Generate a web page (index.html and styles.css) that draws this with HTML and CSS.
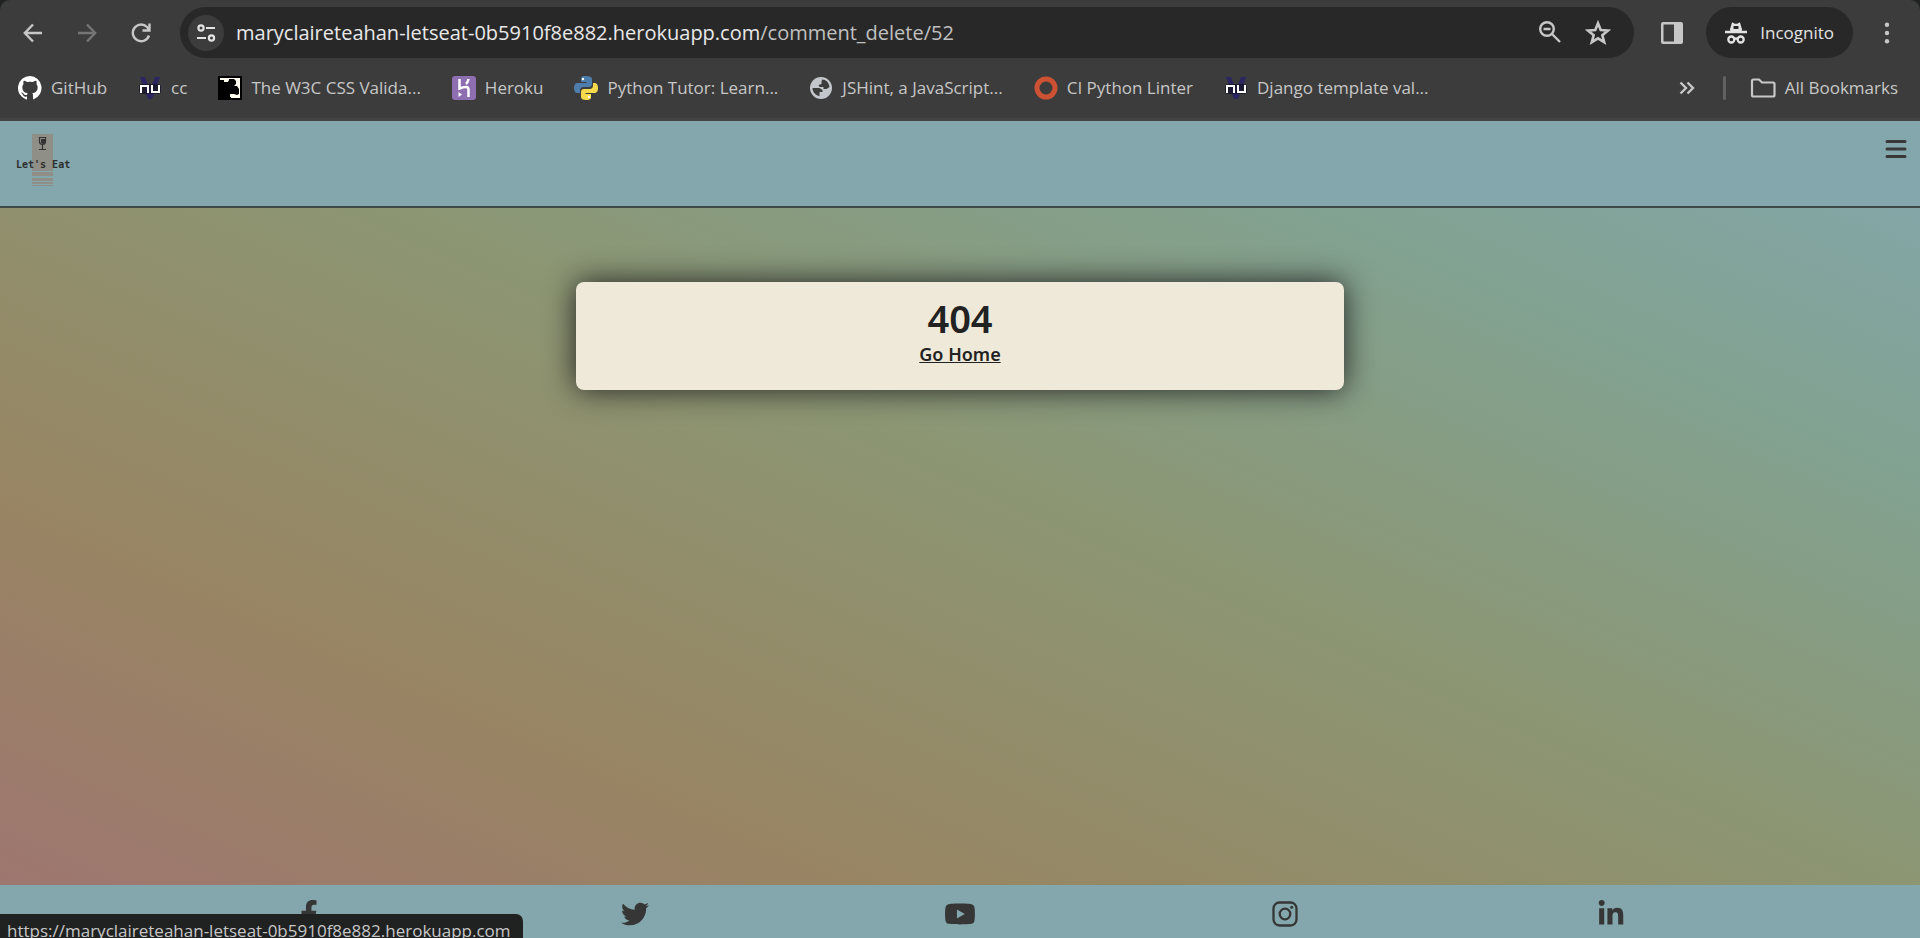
FILE: index.html
```html
<!DOCTYPE html>
<html lang="en">
<head>
<meta charset="utf-8">
<title>404 - Let's Eat</title>
<link rel="stylesheet" href="styles.css">
</head>
<body>
<div class="window">
<div class="chrome">
  <div class="toolbar">
    <div class="nav-buttons">
      <button class="icon-btn" aria-label="Back"><svg viewBox="0 0 24 24" width="24" height="24" fill="none" stroke="currentColor" stroke-width="2.4"><path d="M21 12H4M12 3.500 3.800 12 12 20.500"/></svg></button>
      <button class="icon-btn dim" aria-label="Forward"><svg viewBox="0 0 24 24" width="24" height="24" fill="none" stroke="currentColor" stroke-width="2.400"><path d="M3 12h17M12 3.500 20.200 12 12 20.500"/></svg></button>
      <button class="icon-btn" aria-label="Reload"><svg viewBox="0 0 24 24" width="24" height="24" fill="none" stroke="currentColor" stroke-width="2.400"><path d="M20 14.500A8.300 8.300 0 1 1 18 6l2.500 3M20.500 2.500v7h-7"/></svg></button>
    </div>
    <div class="address">
      <button class="site-info" aria-label="Site information"><svg viewBox="0 0 20 20" width="20" height="20" fill="none" stroke="currentColor" stroke-width="2.200"><circle cx="5" cy="5" r="2.600"/><path d="M10 5h9M1 15h9"/><circle cx="15.500" cy="15" r="2.600"/></svg></button>
      <a class="url" href="#">maryclaireteahan-letseat-0b5910f8e882.herokuapp.com<span class="path">/comment_delete/52</span></a>
      <button class="icon-btn" aria-label="Zoom"><svg viewBox="0 0 24 24" width="24" height="24" fill="none" stroke="currentColor" stroke-width="2.400"><circle cx="8" cy="8" r="6.800"/><path d="M13 13l8 8M4.500 8h7"/></svg></button>
      <button class="icon-btn" aria-label="Bookmark"><svg viewBox="0 0 24 24" width="26" height="26" fill="none" stroke="currentColor" stroke-width="2.400"><path d="m12 3 2.500 6.200 6.700.5-5.200 4.300 1.700 6.500-5.700-3.600-5.700 3.600L8 14 2.800 9.700l6.700-.5z"/></svg></button>
    </div>
    <button class="icon-btn" aria-label="Side panel"><svg viewBox="0 0 24 24" width="24" height="24"><path d="M3 1h18a2 2 0 0 1 2 2v18a2 2 0 0 1-2 2H3a2 2 0 0 1-2-2V3a2 2 0 0 1 2-2zm.500 2.500v17H14v-17z" fill="currentColor" fill-rule="evenodd"/></svg></button>
    <button class="incognito"><svg viewBox="0 0 24 24" width="24" height="24" fill="none" stroke="currentColor" stroke-width="2.300"><path d="M8.500 2.500l2 1h3l2-1L18 10H6z" fill="currentColor" stroke="none"/><path d="M1 11h22M7 9l1.800-6 2 1h2.400l2-1L17 9"/><path d="M9.500 5h5v3h-5z" fill="#282828" stroke="none"/><circle cx="7.300" cy="18.500" r="3"/><circle cx="16.700" cy="18.500" r="3"/><path d="M10 18q2-1 4 0"/></svg><span>Incognito</span></button>
    <button class="icon-btn" aria-label="Menu"><svg viewBox="0 0 24 24" width="24" height="24" fill="currentColor"><circle cx="12" cy="3.700" r="2.200"/><circle cx="12" cy="12" r="2.200"/><circle cx="12" cy="20.300" r="2.200"/></svg></button>
  </div>
  <nav class="bookmarks" aria-label="Bookmarks">
    <a href="#"><svg viewBox="0 0 16 16" width="24" height="24" fill="#fff"><path d="M8 0a8 8 0 0 0-2.530 15.590c.4.070.550-.170.550-.380v-1.490C3.780 14.200 3.310 12.650 3.310 12.650c-.360-.920-.890-1.170-.890-1.170-.730-.5.060-.490.060-.490.800.060 1.230.830 1.230.830.720 1.220 1.870.870 2.330.660.070-.520.280-.870.500-1.070-1.770-.2-3.640-.890-3.640-3.950 0-.870.310-1.590.820-2.150-.080-.2-.360-1.010.080-2.110 0 0 .670-.220 2.200.820a7.700 7.700 0 0 1 4 0c1.530-1.040 2.200-.820 2.200-.820.440 1.100.160 1.910.080 2.110.510.560.820 1.280.820 2.150 0 3.070-1.870 3.750-3.650 3.950.290.250.540.730.540 1.480v2.200c0 .210.150.460.550.380A8 8 0 0 0 8 0z"/></svg><span>GitHub</span></a>
    <a href="#"><svg viewBox="0 0 24 24" width="24" height="24"><path d="M2 1h5l5 13 5-13h5l-8 22h-4z" fill="#2b2662"/><rect x="1" y="8" width="22" height="10" rx="3" fill="#17152b" fill-opacity=".8"/><path d="M3 17v-7h7v7M14 9v7h7V9" fill="none" stroke="#fff" stroke-width="2"/></svg><span>cc</span></a>
    <a href="#"><svg viewBox="0 0 24 24" width="24" height="24"><path d="M0 0h24v24H0z"/><path d="M2 2h20v20h-9v-1h-1v-3h4l1-2h3v-3l-3-3h-3l-2-2 2-1V5l-3-1-1 2H6V4H2z" fill="#fffef0"/><path d="M11 3h5l2 2v3l-2 2h3l2 3v5l-2 1-3-1v-3l-3-2v-3l-2-2z"/></svg><span>The W3C CSS Valida...</span></a>
    <a href="#"><svg viewBox="0 0 24 24" width="24" height="24"><rect width="24" height="24" rx="3" fill="#8d6eb1"/><path d="M7.500 3v9.500q9-3.500 9 1V21M16.500 3q-.3 3-2.500 5" fill="none" stroke="#fff" stroke-width="2.500"/><path d="m6.500 16 3.500 2.500-3.500 2.500z" fill="#fff"/></svg><span>Heroku</span></a>
    <a href="#"><svg viewBox="0 0 24 24" width="24" height="24"><path d="M12 0C7 0 7 2 7 3v3h5.500v1H4C1 7 0 9 0 12s1 5 4 5h2v-3c0-2 2-3 3-3h6c2 0 3-1 3-3V3c0-2-2-3-6-3z" fill="#4c7dac"/><path d="M12 24c5 0 5-2 5-3v-3h-5.500v-1H20c3 0 4-2 4-5s-1-5-4-5h-1v3c0 2-2 3-3 3h-6c-2 0-3 1-3 3v5c0 2 2 3 5 3z" fill="#f7da4c"/><circle cx="9" cy="3" r="1.200" fill="#fff"/><circle cx="15" cy="21" r="1.200" fill="#fff"/></svg><span>Python Tutor: Learn...</span></a>
    <a href="#"><svg viewBox="0 0 24 24" width="24" height="24"><circle cx="12" cy="12" r="11" fill="#c3c6ca"/><path d="M13 3.500c4 0 7 3 7.500 7.500l-3 2h-3v-2h-4l-1-2 3-1V6zM3.500 12h7l3 2v2h-3v4C6.500 19.500 3.500 16 3.500 12z" fill="#3c3c3c"/></svg><span>JSHint, a JavaScript...</span></a>
    <a href="#"><svg viewBox="0 0 24 24" width="24" height="24"><circle cx="12" cy="12" r="9" fill="none" stroke="#cc5233" stroke-width="5"/></svg><span>CI Python Linter</span></a>
    <a href="#"><svg viewBox="0 0 24 24" width="24" height="24"><path d="M2 1h5l5 13 5-13h5l-8 22h-4z" fill="#2b2662"/><rect x="1" y="8" width="22" height="10" rx="3" fill="#17152b" fill-opacity=".8"/><path d="M3 17v-7h7v7M14 9v7h7V9" fill="none" stroke="#fff" stroke-width="2"/></svg><span>Django template val...</span></a>
    <div class="bookmarks-end">
      <button class="icon-btn" aria-label="More bookmarks"><svg viewBox="0 0 24 24" width="24" height="24" fill="none" stroke="currentColor" stroke-width="2.400"><path d="m5.500 6.500 5.500 5.500-5.500 5.500M12.500 6.500 18 12l-5.500 5.500"/></svg></button>
      <span class="divider"></span>
      <a href="#"><svg viewBox="0 0 26 24" width="26" height="24" fill="none" stroke="currentColor" stroke-width="2.200"><path d="M3.500 3.500H9l3 3h11a1.500 1.500 0 0 1 1.500 1.500v11a1.500 1.500 0 0 1-1.500 1.500H3.500A1.500 1.500 0 0 1 2 19V5a1.500 1.500 0 0 1 1.500-1.500z"/></svg><span>All Bookmarks</span></a>
    </div>
  </nav>
</div>
<div class="page">
<header class="site-header">
  <a class="logo" href="#" aria-label="Let's Eat home"><svg viewBox="0 0 60 56" width="60" height="56"><path d="M20 2h21v37H20zM20 40h21v4H20zM20 46h21v3H20zM20 50h21v2H20zM20 53h21v1H20z" fill="#8f8e87"/><path d="M27.500 5.500h6v4q0 3-3 3t-3-3zM30.500 12v5M27 17.500h7" fill="none" stroke="#333" stroke-width="1.200"/><path d="M29 7h4v3q0 2-2 2t-2-2z" fill="#333"/><text x="4" y="36" class="logo-text">Let's Eat</text></svg></a>
  <button class="menu" aria-label="Open menu"><svg viewBox="0 0 22 20" width="22" height="20" stroke="currentColor" stroke-width="3" stroke-linecap="round"><path d="M2 2.500h18M2 10h18M2 17.500h18"/></svg></button>
</header>
<main class="content">
  <section class="card">
    <h1>404</h1>
    <a href="#">Go Home</a>
  </section>
</main>
<footer class="site-footer">
  <a href="#" aria-label="Facebook"><svg viewBox="0 0 320 512" width="18" height="28"><path d="M279.140 288l14.220-92.660h-88.910v-60.130c0-25.350 12.420-50.060 52.240-50.060h40.420V6.260S260.430 0 225.360 0c-73.220 0-121.080 44.380-121.080 124.720v70.620H22.890V288h81.390v224h100.170V288z"/></svg></a>
  <a href="#" aria-label="Twitter"><svg viewBox="0 0 512 512" width="28" height="28"><path d="M459.370 151.716c.325 4.548.325 9.097.325 13.645 0 138.720-105.583 298.558-298.558 298.558-59.452 0-114.680-17.219-161.137-47.106 8.447.974 16.568 1.299 25.340 1.299 49.055 0 94.213-16.568 130.274-44.832-46.132-.975-84.792-31.188-98.112-72.772 6.498.974 12.995 1.624 19.818 1.624 9.421 0 18.843-1.300 27.614-3.573-48.081-9.747-84.143-51.980-84.143-102.985v-1.299c13.969 7.797 30.214 12.670 47.431 13.319-28.264-18.843-46.781-51.005-46.781-87.391 0-19.492 5.197-37.360 14.294-52.954 51.655 63.675 129.300 105.258 216.365 109.807-1.624-7.797-2.599-15.918-2.599-24.040 0-57.828 46.782-104.934 104.934-104.934 30.213 0 57.502 12.670 76.670 33.137 23.715-4.548 46.456-13.320 66.599-25.340-7.798 24.366-24.366 44.833-46.132 57.827 21.117-2.273 41.584-8.122 60.426-16.243-14.292 20.791-32.161 39.308-52.628 54.253z"/></svg></a>
  <a href="#" aria-label="YouTube"><svg viewBox="0 0 576 512" width="32" height="28"><path d="M549.655 124.083c-6.281-23.650-24.787-42.276-48.284-48.597C458.781 64 288 64 288 64S117.220 64 74.629 75.486c-23.497 6.322-42.003 24.947-48.284 48.597-11.412 42.867-11.412 132.305-11.412 132.305s0 89.438 11.412 132.305c6.281 23.650 24.787 41.500 48.284 47.821C117.220 448 288 448 288 448s170.780 0 213.371-11.486c23.497-6.321 42.003-24.171 48.284-47.821 11.412-42.867 11.412-132.305 11.412-132.305s0-89.438-11.412-132.305zm-317.510 213.508V175.185l142.739 81.205-142.739 81.201z"/></svg></a>
  <a href="#" aria-label="Instagram"><svg viewBox="0 0 26 28" width="26" height="28"><rect x="1.500" y="2.500" width="23" height="23" rx="6" fill="none" stroke="currentColor" stroke-width="2.300"/><circle cx="13" cy="14" r="5.300" fill="none" stroke="currentColor" stroke-width="2.300"/><circle cx="19.700" cy="7.300" r="1.500"/></svg></a>
  <a href="#" aria-label="LinkedIn"><svg viewBox="0 0 448 512" width="26" height="28"><path d="M100.280 448H7.400V148.900h92.880zM53.790 108.100C24.090 108.100 0 83.500 0 53.800a53.790 53.790 0 0 1 107.580 0c0 29.700-24.100 54.300-53.790 54.300zM447.900 448h-92.680V302.400c0-34.700-.7-79.200-48.290-79.200-48.290 0-55.690 37.700-55.690 76.700V448h-92.780V148.900h89.080v40.800h1.300c12.400-23.500 42.690-48.300 87.880-48.300 94 0 111.280 61.900 111.280 142.300V448z"/></svg></a>
</footer>
</div>
<div class="status">https://maryclaireteahan-letseat-0b5910f8e882.herokuapp.com</div>
</div>
</body>
</html>
```
FILE: styles.css
```css
* { box-sizing: border-box; }
body { margin: 0; font-family: "Noto Sans", sans-serif; background: #202222; }
a { color: inherit; text-decoration: none; }
button { margin: 0; padding: 0; border: 0; background: none; color: inherit; font: inherit; }
svg { display: block; flex-shrink: 0; }
.window { position: relative; display: flex; flex-direction: column; height: 100vh; overflow: hidden; }

.chrome { background: #3c3c3c; color: #c7c7c7; border-radius: 10px 10px 0 0; border-bottom: 3px solid #434343; font-family: "Open Sans", "Noto Sans", sans-serif; }
.toolbar { display: flex; align-items: center; gap: 22px; padding: 7px 21px 0; }
.nav-buttons { display: flex; gap: 30px; }
.icon-btn { display: flex; }
.dim { color: #757575; }
.address { display: flex; flex: 1; align-items: center; gap: 22px; height: 51px; margin: 0 4px 0 5px; padding: 0 23px 0 8px; border-radius: 26px; background: #282828; }
.site-info { display: flex; align-items: center; justify-content: center; width: 36px; height: 36px; border-radius: 50%; background: #3c3c3c; color: #e3e3e3; }
.url { flex: 1; margin-left: -10px; color: #e8e8e8; font-size: 20px; white-space: nowrap; }
.path { color: #c0c0c0; }
.incognito { display: flex; align-items: center; gap: 12px; height: 51px; padding: 0 19px 0 18px; border-radius: 26px; background: #282828; color: #e3e3e3; font-size: 17px; }
.bookmarks { display: flex; align-items: center; gap: 31px; height: 60px; padding: 0 22px 1px 18px; font-size: 17px; white-space: nowrap; }
.bookmarks a { display: flex; align-items: center; gap: 9px; }
.bookmarks-end { display: flex; align-items: center; gap: 24px; margin-left: auto; }
.divider { width: 3px; height: 24px; border-radius: 2px; background: #616161; }

.page { display: flex; flex: 1; flex-direction: column; background: linear-gradient(to top right, #9e7670 5%, #988563 28%, #8c9673 55%, #82a291 79%, #84a7ad) top / 100% 104% no-repeat; }
.site-header { display: flex; align-items: flex-start; justify-content: space-between; height: 87px; padding: 11px 13px 0 12px; background: #84a7ad; border-bottom: 2px solid #404848; color: #383838; }
.menu { display: flex; margin-top: 7px; }
.logo-text { font: bold 10px "DejaVu Sans Mono", monospace; fill: #2d2d2d; }

.content { flex: 1; padding-top: 74px; }
.card { width: 40%; margin: 0 auto; padding: 13px 16px 23px; border-radius: 8px; background: #efe9d9; box-shadow: 0 0 30px #222; color: #222; text-align: center; font-size: 18px; line-height: 26px; }
.card h1 { margin: 0; font-size: 38px; font-weight: 600; line-height: 46px; }
.card a { text-decoration: underline; font-weight: 600; }

.site-footer { display: flex; justify-content: space-evenly; height: 53px; padding-top: 15px; background: #84a7ad; color: #363636; fill: #363636; }
.site-footer a { display: flex; justify-content: center; width: 32px; }
.status { position: absolute; left: 0; bottom: 0; height: 24px; padding: 3px 12px 0 7px; border-radius: 0 7px 0 0; background: #202222; color: #c7c7c7; font-family: "Open Sans", sans-serif; font-size: 17px; line-height: 27px; white-space: nowrap; overflow: hidden; }
```
